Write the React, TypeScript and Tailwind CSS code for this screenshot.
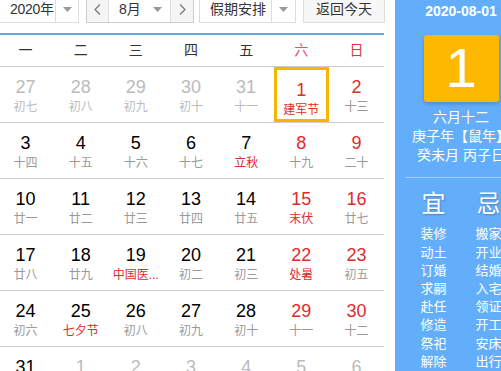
type Day = { n: number; l: string; out?: boolean; red?: boolean; fest?: boolean; sel?: boolean };

const rows: Day[][] = [
  [
    { n: 27, l: "初七", out: true },
    { n: 28, l: "初八", out: true },
    { n: 29, l: "初九", out: true },
    { n: 30, l: "初十", out: true },
    { n: 31, l: "十一", out: true },
    { n: 1, l: "建军节", red: true, fest: true, sel: true },
    { n: 2, l: "十三", red: true },
  ],
  [
    { n: 3, l: "十四" },
    { n: 4, l: "十五" },
    { n: 5, l: "十六" },
    { n: 6, l: "十七" },
    { n: 7, l: "立秋", fest: true },
    { n: 8, l: "十九", red: true },
    { n: 9, l: "二十", red: true },
  ],
  [
    { n: 10, l: "廿一" },
    { n: 11, l: "廿二" },
    { n: 12, l: "廿三" },
    { n: 13, l: "廿四" },
    { n: 14, l: "廿五" },
    { n: 15, l: "末伏", red: true, fest: true },
    { n: 16, l: "廿七", red: true },
  ],
  [
    { n: 17, l: "廿八" },
    { n: 18, l: "廿九" },
    { n: 19, l: "中国医...", fest: true },
    { n: 20, l: "初二" },
    { n: 21, l: "初三" },
    { n: 22, l: "处暑", red: true, fest: true },
    { n: 23, l: "初五", red: true },
  ],
  [
    { n: 24, l: "初六" },
    { n: 25, l: "七夕节", fest: true },
    { n: 26, l: "初八" },
    { n: 27, l: "初九" },
    { n: 28, l: "初十" },
    { n: 29, l: "十一", red: true },
    { n: 30, l: "十二", red: true },
  ],
  [
    { n: 31, l: "十二" },
    { n: 1, l: "十三", out: true },
    { n: 2, l: "十四", out: true },
    { n: 3, l: "十五", out: true },
    { n: 4, l: "十六", out: true },
    { n: 5, l: "十七", out: true },
    { n: 6, l: "十八", out: true },
  ],
];

const yi = ["装修", "动土", "订婚", "求嗣", "赴任", "修造", "祭祀", "解除"];
const ji = ["搬家", "开业", "结婚", "入宅", "领证", "开工", "安床", "出行"];

function Caret() {
  return (
    <svg width="9" height="5" viewBox="0 0 9 5" className="shrink-0">
      <path d="M0 0h9L4.5 5z" fill="#999" />
    </svg>
  );
}

function Chevron({ dir }: { dir: "l" | "r" }) {
  return (
    <svg width="7" height="11" viewBox="0 0 7 11">
      <polyline
        points={dir === "l" ? "6,0.5 1,5.5 6,10.5" : "1,0.5 6,5.5 1,10.5"}
        fill="none"
        stroke="#777"
        strokeWidth="1.2"
      />
    </svg>
  );
}

function Cell({ d }: { d: Day }) {
  const num = d.out ? "text-[#bbb]" : d.red ? "text-[#e02b2b]" : "text-black";
  const lun = d.fest ? "text-[#e02b2b]" : d.out ? "text-[#bbb]" : "text-[#999]";
  return (
    <div
      className={`h-[55px] flex flex-col items-center pt-[9px] ${
        d.sel ? "border-[3px] border-[#f7b500] pt-[6px]" : ""
      }`}
    >
      <div className={`text-[18px] leading-[22px] ${num}`}>{d.n}</div>
      <div className={`text-[12px] leading-[18px] whitespace-nowrap ${lun}`}>{d.l}</div>
    </div>
  );
}

export default function App() {
  const week = ["一", "二", "三", "四", "五", "六", "日"];
  return (
    <div
      className="w-[501px] h-[371px] overflow-hidden flex bg-white"
      style={{ fontFamily: '"Liberation Sans", "Noto Sans CJK SC", sans-serif' }}
    >
      <div className="w-[395px] shrink-0">
        {/* toolbar */}
        <div className="h-[33px] flex items-start gap-[7px] text-[14px] text-[#333]">
          <div className="-ml-[6px] -mt-[4px] h-[27px] w-[85px] border border-[#ddd] flex items-center">
            <span className="pl-[15px] w-[60px] whitespace-nowrap tracking-[-0.3px]">2020年</span>
            <div className="h-full border-l border-[#ddd] flex-1 flex items-center justify-center">
              <Caret />
            </div>
          </div>
          <div className="-mt-[4px] h-[27px] w-[108px] border border-[#ccc] flex items-center">
            <div className="w-[22px] h-full bg-[#f5f5f5] border-r border-[#ddd] flex items-center justify-center">
              <Chevron dir="l" />
            </div>
            <div className="flex-1 flex items-center justify-between pl-[10px] pr-[8px]">
              <span>8月</span>
              <Caret />
            </div>
            <div className="w-[23px] h-full bg-[#f5f5f5] border-l border-[#ddd] flex items-center justify-center">
              <Chevron dir="r" />
            </div>
          </div>
          <div className="-ml-[2px] -mt-[4px] h-[27px] w-[97px] border border-[#ddd] flex items-center">
            <span className="pl-[10px] w-[71px] whitespace-nowrap">假期安排</span>
            <div className="h-full border-l border-[#ddd] flex-1 flex items-center justify-center">
              <Caret />
            </div>
          </div>
          <div className="-mt-[4px] h-[27px] w-[82px] border border-[#ddd] bg-[#f7f7f7] flex items-center justify-center">
            返回今天
          </div>
        </div>
        <div className="w-[384px] h-[2px] bg-[#5ea6e8]" />

        {/* calendar */}
        <div className="-ml-[2px] w-[386px]">
          <div className="grid grid-cols-7 h-[32px] items-center border-b border-[#ccc] text-[14px] text-[#333]">
            {week.map((w, i) => (
              <div
                key={w}
                className={`text-center ${i === 5 ? "text-[#e5506a]" : i === 6 ? "text-[#e3343f]" : ""}`}
              >
                {w}
              </div>
            ))}
          </div>
          {rows.map((r, ri) => (
            <div key={ri} className="grid grid-cols-7 border-b border-[#ccc]">
              {r.map((d, i) => (
                <Cell key={i} d={d} />
              ))}
            </div>
          ))}
        </div>
      </div>

      {/* side panel */}
      <div className="w-[132px] shrink-0 bg-[#63aefa] text-white flex flex-col items-center">
        <div className="text-[14px] leading-[20px] font-bold mt-[1px]">2020-08-01</div>
        <div className="mt-[14px] w-[75px] h-[74px] rounded-[3px] bg-[#ffb800] shadow-[0_2px_4px_rgba(0,0,0,0.2)] flex items-center justify-center text-[56px] leading-none">
          1
        </div>
        <div className="mt-[6px] text-[14px] leading-[19px] text-center">
          <div>六月十二</div>
          <div className="whitespace-nowrap">庚子年【鼠年】</div>
          <div className="whitespace-nowrap">癸未月 丙子日</div>
        </div>
        <div className="mt-[12px] w-[112px] h-[2px] bg-[#a6cffb]" />
        <div className="mt-[12px] w-[110px] grid grid-cols-2">
          {[
            { h: "宜", items: yi },
            { h: "忌", items: ji },
          ].map((c) => (
            <div key={c.h} className="flex flex-col items-center">
              <div className="text-[24px] leading-[28px] [text-shadow:1px_1px_2px_rgba(0,0,0,0.25)]">
                {c.h}
              </div>
              <div className="mt-[7px] text-[13px] leading-[18.2px] text-center">
                {c.items.map((t) => (
                  <div key={t}>{t}</div>
                ))}
              </div>
            </div>
          ))}
        </div>
      </div>
    </div>
  );
}
